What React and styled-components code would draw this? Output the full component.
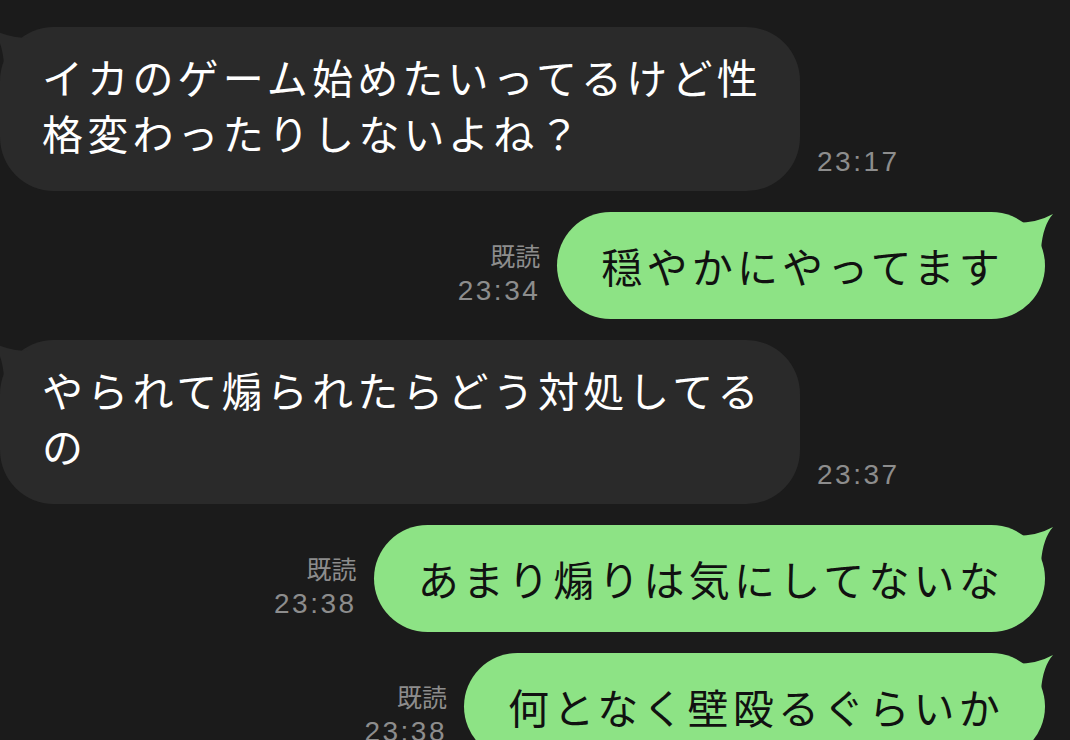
import React from "react";
import styled, { createGlobalStyle } from "styled-components";

const GlobalStyle = createGlobalStyle`
  html, body {
    margin: 0;
    padding: 0;
    background: #1b1b1b;
    overflow: hidden;
  }
  #root {
    height: 740px;
  }
`;

const Screen = styled.div`
  width: 1070px;
  height: 740px;
  overflow: hidden;
  background: #1b1b1b;
  display: flex;
  flex-direction: column;
  gap: 21px;
  padding-top: 27px;
  box-sizing: border-box;
`;

const Row = styled.div`
  display: flex;
  align-items: flex-end;
  justify-content: ${p => (p.$mine ? "flex-end" : "flex-start")};
  padding-right: ${p => (p.$mine ? "25px" : "0")};
  flex-shrink: 0;
`;

const Bubble = styled.div`
  position: relative;
  box-sizing: border-box;
  max-width: ${p => (p.$mine ? "720px" : "800px")};
  padding: ${p => (p.$mine ? "25px 41px 26px 44px" : "21px 30px 31px 42px")};
  border-radius: 54px;
  background: ${p => (p.$mine ? "#8de385" : "#2a2a2a")};
  color: ${p => (p.$mine ? "#111" : "#fff")};
  font-family: "Noto Sans CJK JP", "Noto Sans", sans-serif;
  font-size: 41px;
  line-height: 56px;
  letter-spacing: 4.2px;
  word-break: break-all;
`;

const Tail = styled.svg`
  position: absolute;
  top: -3px;
  width: 50px;
  height: 40px;
  ${p =>
    p.$mine
      ? "right: -10px;"
      : "left: -10px; transform: scaleX(-1);"}
`;

const Meta = styled.div`
  display: flex;
  flex-direction: column;
  align-items: ${p => (p.$mine ? "flex-end" : "flex-start")};
  margin: ${p => (p.$mine ? "0 17px 11px 0" : "0 0 12px 17px")};
  color: #8d8d8d;
`;

const ReadMark = styled.span`
  font-family: "Noto Sans CJK JP", sans-serif;
  font-size: 25px;
  line-height: 35px;
`;

const Time = styled.span`
  font-family: "Liberation Sans", Arial, sans-serif;
  font-size: 28px;
  line-height: 35px;
  letter-spacing: 2.5px;
`;

const BubbleTail = ({ mine, color }) => (
  <Tail $mine={mine} viewBox="0 0 50 40">
    <path d="M10 14 Q32 14 48 5 Q38 16 36 40 L10 40 Z" fill={color} />
  </Tail>
);

const messages = [
  { mine: false, text: "イカのゲーム始めたいってるけど性格変わったりしないよね？", time: "23:17" },
  { mine: true, text: "穏やかにやってます", time: "23:34" },
  { mine: false, text: "やられて煽られたらどう対処してるの", time: "23:37" },
  { mine: true, text: "あまり煽りは気にしてないな", time: "23:38" },
  { mine: true, text: "何となく壁殴るぐらいか", time: "23:38" },
];

export default function App() {
  return (
    <>
      <GlobalStyle />
      <Screen>
        {messages.map((m, i) =>
          m.mine ? (
            <Row key={i} $mine>
              <Meta $mine>
                <ReadMark>既読</ReadMark>
                <Time>{m.time}</Time>
              </Meta>
              <Bubble $mine>
                <BubbleTail mine color="#8de385" />
                {m.text}
              </Bubble>
            </Row>
          ) : (
            <Row key={i}>
              <Bubble>
                <BubbleTail color="#2a2a2a" />
                {m.text}
              </Bubble>
              <Meta>
                <Time>{m.time}</Time>
              </Meta>
            </Row>
          )
        )}
      </Screen>
    </>
  );
}
